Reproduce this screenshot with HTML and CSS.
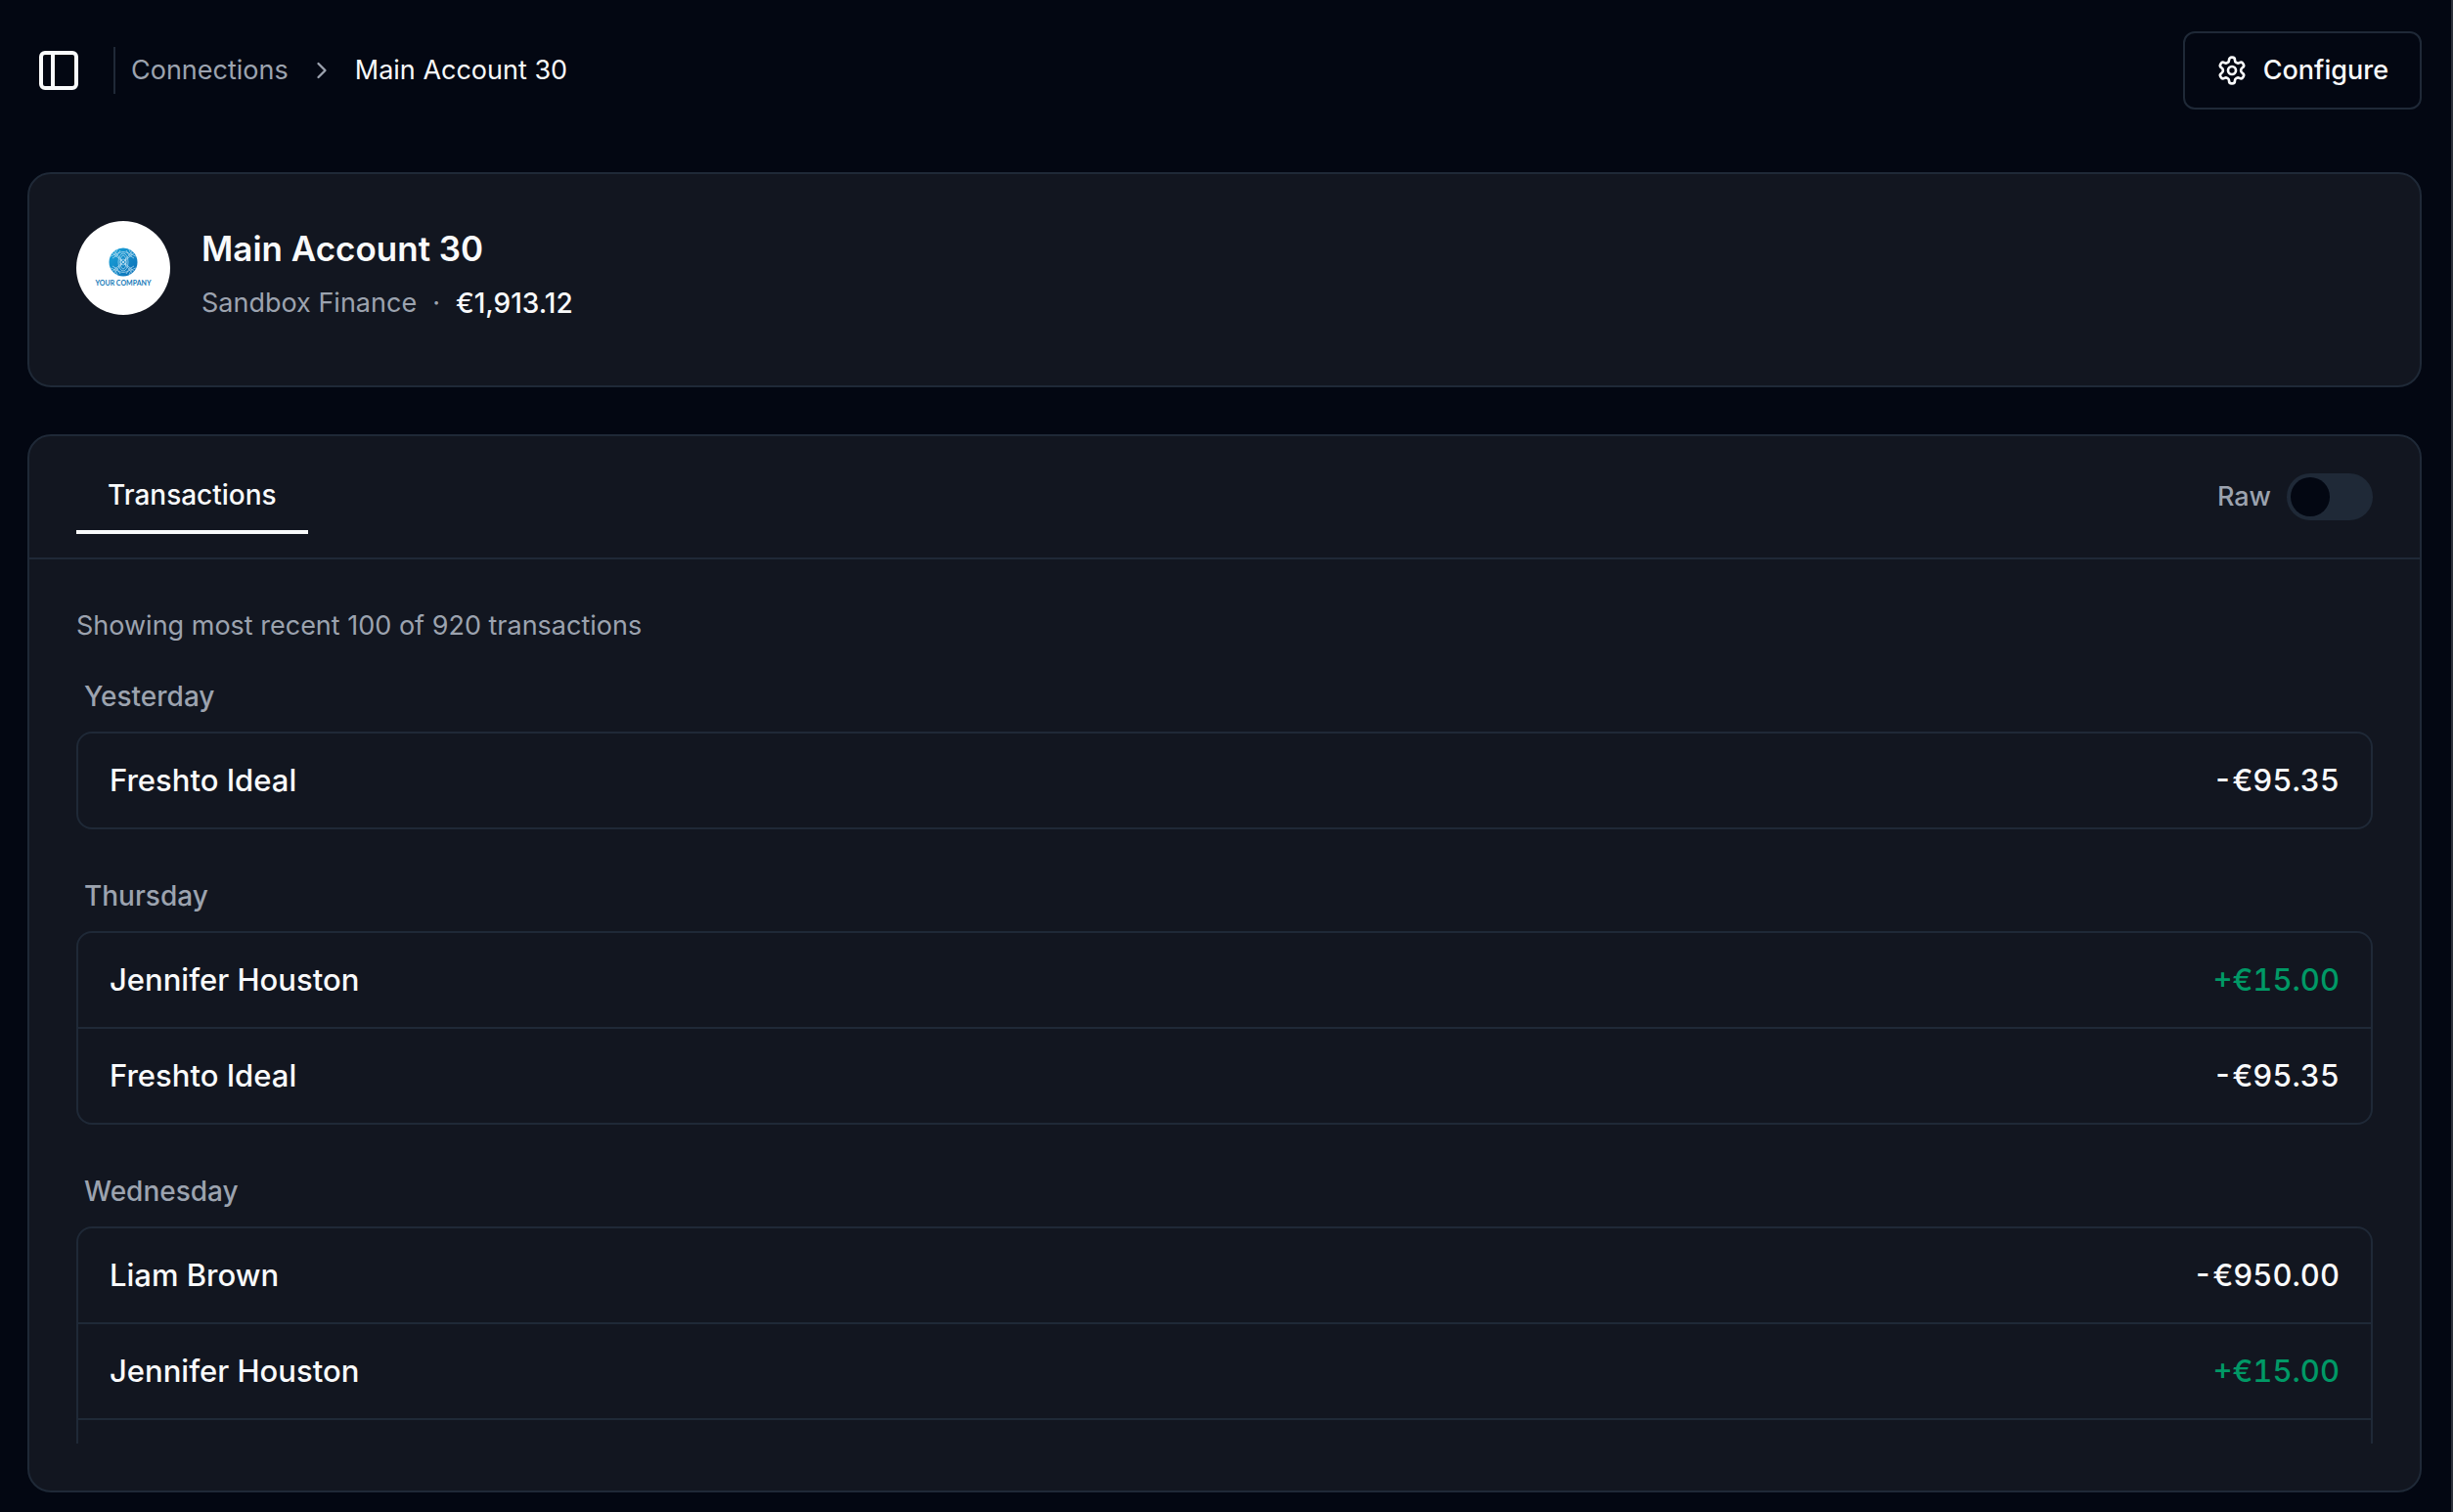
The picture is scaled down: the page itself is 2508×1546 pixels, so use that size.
FILE: index.html
```html
<!DOCTYPE html>
<html lang="en">
<head>
    <meta charset="UTF-8">
    <meta name="viewport" content="width=device-width, initial-scale=1.0">
    <title>Main Account 30</title>
    <link rel="stylesheet" href="styles.css">
</head>
<body>
    <header class="topbar">
        <button class="sidebar-toggle" type="button" aria-label="Toggle sidebar">
            <svg viewBox="0 0 40 40" fill="none" stroke="currentColor" stroke-width="4">
                <rect x="2" y="2" width="36" height="36" rx="4"/>
                <path d="M14 2v36"/>
            </svg>
        </button>
        <nav class="breadcrumb" aria-label="Breadcrumb">
            <a href="#">Connections</a>
            <svg class="chevron" viewBox="0 0 24 24" fill="none" stroke="currentColor" stroke-width="2" stroke-linecap="round" stroke-linejoin="round">
                <path d="m9 18 6-6-6-6"/>
            </svg>
            <span class="current">Main Account 30</span>
        </nav>
        <button class="configure" type="button">
            <svg viewBox="0 0 24 24" fill="none" stroke="currentColor" stroke-width="2" stroke-linecap="round" stroke-linejoin="round">
                <path d="M12.22 2h-.44a2 2 0 0 0-2 2v.18a2 2 0 0 1-1 1.73l-.43.25a2 2 0 0 1-2 0l-.15-.08a2 2 0 0 0-2.73.73l-.22.38a2 2 0 0 0 .73 2.73l.15.1a2 2 0 0 1 1 1.72v.51a2 2 0 0 1-1 1.74l-.15.09a2 2 0 0 0-.73 2.73l.22.38a2 2 0 0 0 2.73.73l.15-.08a2 2 0 0 1 2 0l.43.25a2 2 0 0 1 1 1.73V20a2 2 0 0 0 2 2h.44a2 2 0 0 0 2-2v-.18a2 2 0 0 1 1-1.73l.43-.25a2 2 0 0 1 2 0l.15.08a2 2 0 0 0 2.73-.73l.22-.39a2 2 0 0 0-.73-2.73l-.15-.08a2 2 0 0 1-1-1.74v-.5a2 2 0 0 1 1-1.74l.15-.09a2 2 0 0 0 .73-2.73l-.22-.38a2 2 0 0 0-2.73-.73l-.15.08a2 2 0 0 1-2 0l-.43-.25a2 2 0 0 1-1-1.73V4a2 2 0 0 0-2-2z"/>
                <circle cx="12" cy="12" r="3"/>
            </svg>
            Configure
        </button>
    </header>

    <main class="content">
        <section class="card account">
            <div class="avatar">
                <svg viewBox="0 0 30 30" fill="none">
                    <defs>
                        <linearGradient id="globe" x1="0" y1="0" x2="1" y2="1">
                            <stop offset="0" stop-color="#1ba6db"/>
                            <stop offset="1" stop-color="#0b6db5"/>
                        </linearGradient>
                        <clipPath id="round"><circle cx="15" cy="15" r="14.5"/></clipPath>
                    </defs>
                    <circle cx="15" cy="15" r="14.5" fill="url(#globe)"/>
                    <g clip-path="url(#round)" stroke="#d5edf8" stroke-width=".6">
                        <circle cx="15" cy="15" r="3"/>
                        <ellipse cx="15" cy="15" rx="5" ry="9"/>
                        <ellipse cx="15" cy="15" rx="3" ry="7"/>
                        <path d="M3 5 15 15 3 25M5 3l10 12L5 27M27 5 15 15l12 10M25 3 15 15l10 12"/>
                        <path d="M2 9q5-1 7-7M4 11q6-2 8-8M28 9q-5-1-7-7M26 11q-6-2-8-8M2 21q5 1 7 7M4 19q6 2 8 8M28 21q-5 1-7 7M26 19q-6 2-8 8"/>
                        <path d="M6 8q9-7 18 0M6 22q9 7 18 0"/>
                    </g>
                </svg>
                <span>YOUR COMPANY</span>
            </div>
            <div class="account-info">
                <h1>Main Account 30</h1>
                <p><span>Sandbox Finance</span><span>·</span><span class="balance">€1,913.12</span></p>
            </div>
        </section>

        <section class="card activity">
            <div class="card-header">
                <div role="tablist">
                    <button class="tab" type="button" role="tab" aria-selected="true">Transactions</button>
                </div>
                <div class="raw">
                    <label for="raw">Raw</label>
                    <input class="switch" type="checkbox" role="switch" id="raw">
                </div>
            </div>
            <div class="card-body">
                <div class="scroll">
                    <p class="summary">Showing most recent 100 of 920 transactions</p>

                    <section class="day">
                        <h2>Yesterday</h2>
                        <ul>
                            <li><span>Freshto Ideal</span><span class="amount">-€95.35</span></li>
                        </ul>
                    </section>

                    <section class="day">
                        <h2>Thursday</h2>
                        <ul>
                            <li><span>Jennifer Houston</span><span class="amount credit">+€15.00</span></li>
                            <li><span>Freshto Ideal</span><span class="amount">-€95.35</span></li>
                        </ul>
                    </section>

                    <section class="day">
                        <h2>Wednesday</h2>
                        <ul>
                            <li><span>Liam Brown</span><span class="amount">-€950.00</span></li>
                            <li><span>Jennifer Houston</span><span class="amount credit">+€15.00</span></li>
                            <li></li>
                        </ul>
                    </section>
                </div>
            </div>
        </section>
    </main>
</body>
</html>
```
FILE: styles.css
```css
:root {
    --background: #030712;
    --card: #121620;
    --border: #1f2937;
    --text: #f9fafb;
    --muted: #9ca3af;
    --green: #009966;
}

* {
    box-sizing: border-box;
}

body {
    display: flex;
    flex-direction: column;
    height: 100vh;
    margin: 0;
    border-right: 2px solid #2b303a;
    background-color: var(--background);
    color: var(--text);
    font-family: Inter, "Liberation Sans", sans-serif;
    font-size: 27px;
    line-height: 40px;
}

h1, h2, p, ul {
    margin: 0;
    padding: 0;
}

button {
    border: none;
    background: none;
    color: inherit;
    font: inherit;
    cursor: pointer;
}

/* top bar */
.topbar {
    display: flex;
    align-items: center;
    flex-shrink: 0;
    height: 144px;
    padding: 0 30px 0 28px;
}
.sidebar-toggle {
    display: flex;
    padding: 12px;
}
.sidebar-toggle svg {
    width: 40px;
    height: 40px;
}
.breadcrumb {
    display: flex;
    align-items: center;
    gap: 20px;
    margin-left: 24px;
    color: var(--muted);
}
.breadcrumb::before {
    content: "";
    width: 2px;
    height: 48px;
    margin-right: -4px;
    background-color: var(--border);
}
.breadcrumb a {
    color: inherit;
    text-decoration: none;
}
.chevron {
    width: 28px;
    height: 28px;
}
.current {
    color: var(--text);
}
.configure {
    display: flex;
    align-items: center;
    gap: 16px;
    height: 80px;
    margin-left: auto;
    padding: 0 32px;
    border: 2px solid var(--border);
    border-radius: 12px;
    font-weight: 500;
}
.configure svg {
    width: 32px;
    height: 32px;
}

.content {
    display: flex;
    flex: 1;
    flex-direction: column;
    gap: 48px;
    min-height: 0;
    padding: 32px 30px 20px 28px;
}
.card {
    border: 2px solid var(--border);
    border-radius: 24px;
    background-color: var(--card);
}

/* account */
.account {
    display: flex;
    align-items: flex-start;
    gap: 32px;
    padding: 48px 48px 64px;
}
.avatar {
    display: flex;
    flex-direction: column;
    align-items: center;
    justify-content: center;
    width: 96px;
    height: 96px;
    border-radius: 50%;
    background-color: #fff;
    color: #1679b8;
    font-family: Lato, sans-serif;
    font-size: 7px;
    font-weight: 700;
    line-height: 12px;
}
.avatar svg {
    width: 30px;
    height: 30px;
}
.account-info h1 {
    font-size: 35px;
    font-weight: 600;
    line-height: 56px;
}
.account-info p {
    display: flex;
    gap: 16px;
    margin-top: 8px;
    color: var(--muted);
}
.account-info .balance {
    color: var(--text);
    font-size: 28px;
    font-weight: 500;
}

/* transactions */
.activity {
    display: flex;
    flex: 1;
    flex-direction: column;
    min-height: 0;
}
.card-header {
    display: flex;
    align-items: center;
    justify-content: space-between;
    padding: 24px 48px;
    border-bottom: 2px solid var(--border);
}
.tab {
    display: block;
    padding: 16px 32px;
    border-bottom: 4px solid var(--text);
    font-size: 28px;
    font-weight: 500;
}
.raw {
    display: flex;
    align-items: center;
    gap: 16px;
    color: var(--muted);
    font-weight: 500;
}
.switch {
    appearance: none;
    width: 88px;
    height: 48px;
    margin: 0;
    padding: 4px;
    border-radius: 24px;
    background-color: var(--border);
    cursor: pointer;
}
.switch::before {
    content: "";
    display: block;
    width: 40px;
    height: 40px;
    border-radius: 50%;
    background-color: var(--background);
}
.switch:checked {
    background-color: var(--text);
}
.switch:checked::before {
    margin-left: auto;
}
.card-body {
    flex: 1;
    min-height: 0;
    padding: 48px;
}
.scroll {
    height: 100%;
    overflow: auto;
    scrollbar-width: none;
}
.summary {
    margin-bottom: 32px;
    color: var(--muted);
}
.day {
    margin-bottom: 48px;
}
.day h2 {
    padding: 0 8px 16px;
    color: var(--muted);
    font-size: 28px;
    font-weight: 500;
}
.day ul {
    border: 2px solid var(--border);
    border-radius: 16px;
    list-style: none;
}
.day li {
    display: flex;
    align-items: center;
    justify-content: space-between;
    min-height: 96px;
    padding: 0 32px;
    font-size: 31px;
    font-weight: 500;
}
.day li + li {
    min-height: 98px;
    border-top: 2px solid var(--border);
}
.amount {
    font-variant-numeric: tabular-nums;
}
.amount.credit {
    color: var(--green);
}
```
